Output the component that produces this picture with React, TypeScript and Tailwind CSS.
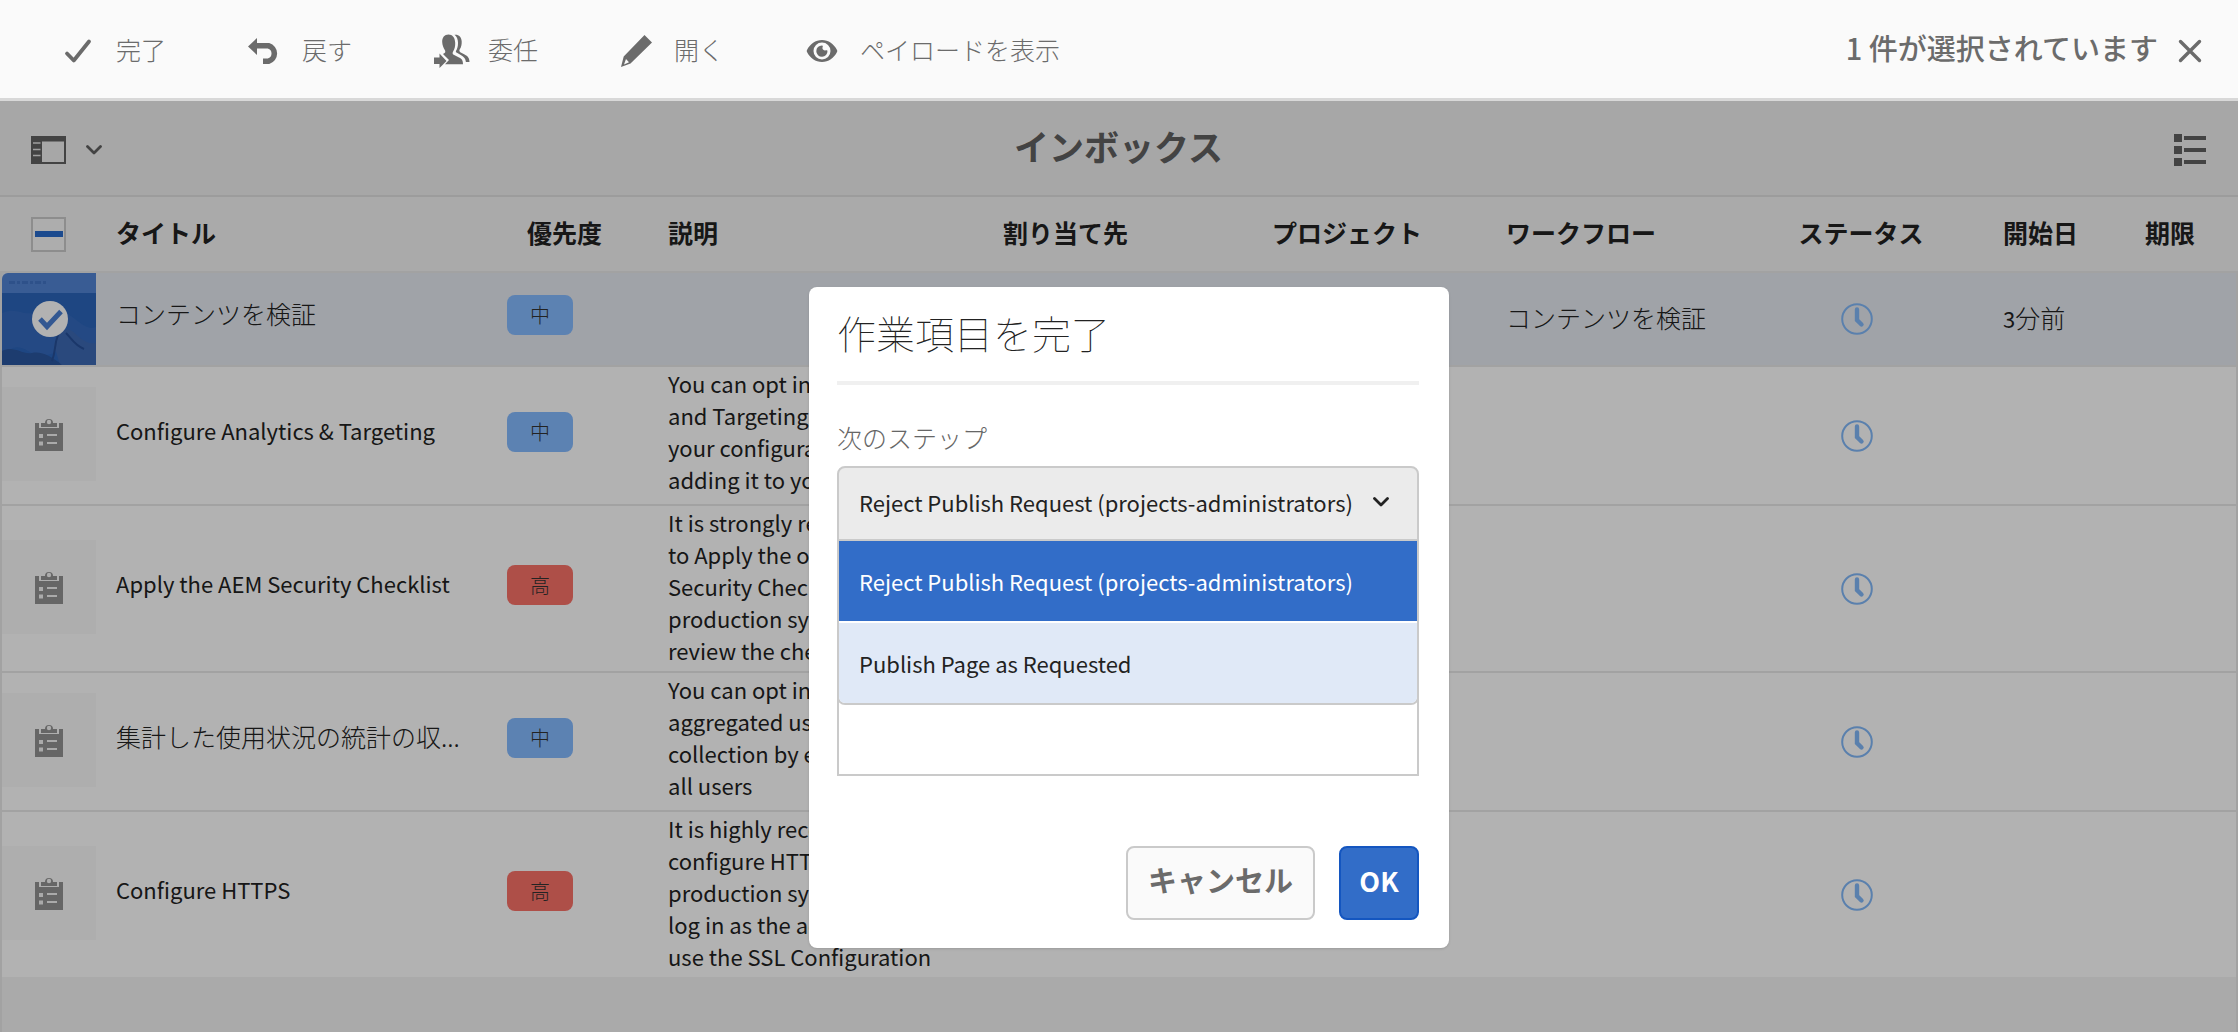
import type { ReactNode } from "react";

type Priority = "mid" | "high";

interface Item {
  title: string;
  jp?: boolean;
  priority: Priority;
  lines: string[];
  workflow?: string;
  started?: number;
  selected?: boolean;
}

const items: Item[] = [
  { title: "コンテンツを検証", jp: true, priority: "mid", lines: [], workflow: "コンテンツを検証", started: 3, selected: true },
  {
    title: "Configure Analytics & Targeting",
    priority: "mid",
    lines: ["You can opt in to Analytics", "and Targeting by editing", "your configuration and", "adding it to your site"],
  },
  {
    title: "Apply the AEM Security Checklist",
    priority: "high",
    lines: ["It is strongly recommended", "to Apply the official", "Security Checklist on", "production systems and", "review the checklist"],
  },
  {
    title: "集計した使用状況の統計の収...",
    jp: true,
    priority: "mid",
    lines: ["You can opt in to", "aggregated usage", "collection by enabling for", "all users"],
  },
  {
    title: "Configure HTTPS",
    priority: "high",
    lines: ["It is highly recommended", "configure HTTPS on", "production systems and", "log in as the admin to", "use the SSL Configuration"],
  },
];

function CheckIcon() {
  return (
    <svg viewBox="0 0 32 32" className="size-8" fill="none" stroke="currentColor" strokeWidth="3.8" strokeLinecap="round" strokeLinejoin="round">
      <path d="M5 18.500 11.800 25.500 27 6.500" />
    </svg>
  );
}

function UndoIcon() {
  return (
    <svg viewBox="0 0 32 32" className="size-8">
      <path fill="currentColor" d="M0 11.500 9 3v17z" />
      <path fill="none" stroke="currentColor" strokeWidth="5.600" d="M8 10.800h12.500a8 8 0 0 1 0 15.400H15" />
    </svg>
  );
}

function DelegateIcon() {
  return (
    <svg viewBox="0 0 36 36" className="-mr-1 size-9" fill="currentColor">
      <path d="M14.500 1.500c-4 0-6.500 3-6.300 7.500.1 3.200 1.200 5.800 2.600 8 .6.900.8 2.500-.2 3l-1.600.9 6 6-4 4.300H29c0-4.500-1.500-5.300-4.500-6.900l-4.800-2.500c-1.200-.6-1.400-2.200-.6-3.400 1.600-2.200 2.200-5 2.100-8.600-.200-5.300-2.700-8.300-6.700-8.300z" />
      <path d="M20.500 1.800c2.300 1.700 3.400 4.500 3.500 8 0 3.500-.6 5.800-2 8.300-.3.600-.1 1.200.5 1.500l4.300 2.300c3.400 1.900 4.700 3.600 5.100 7.100H35.500c-.1-4-1.600-5.700-4.900-7.500l-4.300-2.300c-1-.6-1.200-1.800-.5-2.900 1.400-2 2-4.700 1.900-7.800-.2-4.500-3-7.200-7.200-6.700z" />
      <path d="M0 24.500h5.500v-4L12.500 28l-7 7v-4H0z" />
    </svg>
  );
}

function PencilIcon() {
  return (
    <svg viewBox="0 0 32 32" className="size-8" fill="currentColor">
      <path fillRule="evenodd" d="m24.500 0 7.500 7.500L10.500 28.500 1 32l2.700-10.500zM6 24l-2 5.500 5-2.300z" />
    </svg>
  );
}

function EyeIcon() {
  return (
    <svg viewBox="0 0 32 32" className="size-8">
      <path fill="currentColor" fillRule="evenodd" d="M16 5C9.500 5 4 9 1 15c-.4.700-.4 1.300 0 2 3 6 8.500 10 15 10s12-4 15-10c.4-.7.4-1.300 0-2C28 9 22.500 5 16 5zm0 2.500a8.500 8.500 0 1 1 0 17 8.500 8.500 0 0 1 0-17z" />
      <path fill="currentColor" d="M16 10.500c1 0 1 .8.600 1.600-.7 1.700.6 3.600 2.600 3.300.9-.1 2-.6 2.300.4A5.600 5.600 0 1 1 16 10.500z" />
    </svg>
  );
}

function CloseIcon() {
  return (
    <svg viewBox="0 0 24 24" className="size-6" fill="none" stroke="currentColor" strokeWidth="3.400" strokeLinecap="round">
      <path d="m2.500 2.500 19 19M21.500 2.500l-19 19" />
    </svg>
  );
}

function RailIcon() {
  return (
    <svg viewBox="0 0 35 28" className="h-7 w-[35px]">
      <path fill="currentColor" fillRule="evenodd" d="M0 0h35v28H0zM11 5.500v20.500h22V5.500z" />
      <path stroke="#e4e4e4" strokeWidth="1.600" d="M2 7h7.500M2 13.500h7.500M2 19.500h7.500" />
    </svg>
  );
}

function ChevronIcon() {
  return (
    <svg viewBox="0 0 16 10" className="h-2.5 w-4" fill="none" stroke="currentColor" strokeWidth="2.800" strokeLinecap="round" strokeLinejoin="round">
      <path d="m1.500 1.500 6.500 6.500 6.500-6.500" />
    </svg>
  );
}

function ListIcon() {
  return (
    <svg viewBox="0 0 32 32" className="size-8" fill="currentColor">
      <path d="M0 0h8v8H0zM0 12h8v8H0zM0 24h8v8H0zM10 2h22v4H10zM10 14h22v4H10zM10 26h22v4H10z" />
    </svg>
  );
}

function ClockIcon() {
  return (
    <svg viewBox="0 0 32 32" className="mx-auto size-8 text-[#82b8f8]" fill="none" stroke="currentColor">
      <circle cx="16" cy="16" r="14.800" strokeWidth="2" />
      <path d="M16 6.500v10.500l4.500 4.500" strokeWidth="4.400" strokeLinecap="round" />
    </svg>
  );
}

function ClipboardIcon() {
  return (
    <svg viewBox="0 0 28 34" className="h-[34px] w-7" fill="#929292">
      <path d="M0 6h4v5h20V6h4v28H0z" />
      <path d="M6 6h4a4 4 0 0 1 8 0h4v4H6z" />
      <circle cx="14" cy="5" r="2.200" fill="#f6f6f6" />
      <path fill="#f4f4f4" d="M4 17h4v4H4zM4 24.500h4v4H4zM12 17h10v2H12zM12 25h10v2H12z" />
    </svg>
  );
}

function PageThumbnail() {
  return (
    <svg viewBox="0 0 94 92" className="block h-[92px] w-[94px]">
      <path fill="#5284d4" d="M0 92V6a6 6 0 0 1 6-6h88v92z" />
      <path fill="#2b65bb" d="M0 20h94v72H0z" />
      <path fill="#3469bd" d="M0 40c14-6 20 2 30 0s20-8 34 0 20 18 30 14v18c-20 2-22-6-32 2s-24 12-36 4-18-2-26 4z" />
      <path fill="#3d69b4" d="M52 72c4-14 12-18 18-14s12 14 24 12v22H58z" />
      <path fill="#2a569f" d="M0 78c12-6 20 4 30 2s20 4 30 12H0z" />
      <path fill="none" stroke="#264f98" strokeWidth="2" d="M50 88c4-10 2-16 6-26m8-2c6 6 8 12 18 16" />
      <path stroke="#4274c6" strokeWidth="3" strokeDasharray="6 2 3 2" d="M7 9.500h38" />
      <circle cx="48" cy="46" r="18" fill="#fff" />
      <path fill="none" stroke="#4a7fd2" strokeWidth="5" d="m38 46 7 7.500 14-15" />
    </svg>
  );
}

function ToolButton({ icon, label }: { icon: ReactNode; label: string }) {
  return (
    <button type="button" className="flex items-center gap-[22px] font-light">
      <span className="pt-1">{icon}</span>
      <span>{label}</span>
    </button>
  );
}

function Badge({ priority }: { priority: Priority }) {
  return (
    <span
      className={
        priority === "mid"
          ? "block h-10 w-[66px] rounded-lg bg-[#84baff] text-center text-xl leading-10 font-light text-[#333]"
          : "block h-10 w-[66px] rounded-lg bg-[#fa7168] text-center text-xl leading-10 font-light text-[#333]"
      }
    >
      {priority === "mid" ? "中" : "高"}
    </span>
  );
}

function Row({ item, first, last }: { item: Item; first: boolean; last: boolean }) {
  const cell = last ? "pl-5" : "border-b-2 border-[#e8e8e8] pl-5";
  const light = cell + " pb-1 font-light";
  return (
    <tr className={item.selected ? "bg-[#e6eaf1]" : "bg-white"}>
      <td className={last ? "border-l-2 border-[#e8e8e8]" : "border-b-2 border-l-2 border-[#e8e8e8]"}>
        {first ? (
          <PageThumbnail />
        ) : (
          <div className="mb-1 flex h-[94px] w-[94px] items-center justify-center bg-[#fafafa]">
            <ClipboardIcon />
          </div>
        )}
      </td>
      <td className={item.jp ? cell + " font-light" : cell + " text-[22px]"}>
        <div className="mb-3 whitespace-nowrap">{item.title}</div>
      </td>
      <td className={cell}>
        <div className="mb-2">
          <Badge priority={item.priority} />
        </div>
      </td>
      <td className={cell + " align-top text-[22px]"}>
        {item.lines.length > 0 && (
          <div className={item.lines.length > 4 ? "h-[165px]" : "h-[137px]"}>
            {item.lines.map((line) => (
              <div key={line} className="whitespace-nowrap">
                {line}
              </div>
            ))}
          </div>
        )}
      </td>
      <td className={cell} />
      <td className={cell} />
      <td className={light}>{item.workflow}</td>
      <td className={last ? "" : "border-b-2 border-[#e8e8e8]"}>
        <ClockIcon />
      </td>
      <td className={light}>
        {item.started && (
          <>
            <span className="text-[22px] font-normal">{item.started}</span>分前
          </>
        )}
      </td>
      <td className={cell + " border-r-2 border-[#e8e8e8]"} />
    </tr>
  );
}

function CompleteDialog() {
  const choices = ["Reject Publish Request (projects-administrators)", "Publish Page as Requested"];
  return (
    <section
      role="dialog"
      aria-labelledby="dialog-title"
      className="absolute top-[186px] left-[calc(50%-310px)] z-20 flex w-[640px] flex-col rounded-lg bg-white pr-[30px] pb-7 pl-7 shadow-sm"
    >
      <h2 id="dialog-title" className="border-b-4 border-[#f0f0f0] pt-[18px] pb-[21px] text-[39px] leading-[55px] font-thin text-[#222]">
        作業項目を完了
      </h2>
      <label htmlFor="next-step" className="mt-8 leading-10 font-light text-[#666]">
        次のステップ
      </label>
      <div className="relative mt-[9px] text-[22px]">
        <select
          id="next-step"
          className="block h-[75px] w-full appearance-none rounded-t-lg border-2 border-[#cacaca] bg-[#ebebeb] pr-14 pb-1 pl-5"
        >
          {choices.map((c) => (
            <option key={c}>{c}</option>
          ))}
        </select>
        <span className="pointer-events-none absolute top-[31px] right-[30px] leading-none">
          <ChevronIcon />
        </span>
        <ul role="listbox" aria-label="次のステップ" className="absolute inset-x-0 top-[73px] z-10 overflow-hidden rounded-b-lg border-2 border-[#cacaca] bg-white">
          <li role="option" aria-selected="true" className="flex h-[82px] items-center border-b-2 border-white bg-[#326dc8] pl-5 text-white">
            {choices[0]}
          </li>
          <li role="option" aria-selected="false" className="flex h-20 items-center bg-[#e0e9f7] pl-5">
            {choices[1]}
          </li>
        </ul>
      </div>
      <textarea aria-label="コメント" className="mt-32 block h-[107px] resize-none border-2 border-[#cacaca] bg-white p-4" />
      <div className="mt-[70px] flex justify-end gap-6">
        <button type="button" className="h-[74px] rounded-lg border-2 border-[#cacaca] bg-[#fafafa] px-5 pb-2 text-[29px] font-bold text-[#6b6b6b]">
          キャンセル
        </button>
        <button type="button" className="h-[74px] w-20 rounded-lg border-2 border-[#1456c0] bg-[#326dc8] pb-1 text-[27px] font-bold text-white">
          OK
        </button>
      </div>
    </section>
  );
}

export default function App() {
  const head = "border-b-2 border-[#e8e8e8] pb-1 pl-5";
  return (
    <div className="flex min-h-screen flex-col bg-[#f4f4f4] font-['Noto_Sans_CJK_JP',sans-serif] text-[25px] leading-8 text-[#222]">
      <header className="relative z-20 flex h-[101px] items-center justify-between border-b-3 border-[#d8d8d8] bg-[#fafafa] pr-9 pl-[62px] text-[#6b6b6b]">
        <nav className="flex gap-[82px]">
          <ToolButton icon={<CheckIcon />} label="完了" />
          <ToolButton icon={<UndoIcon />} label="戻す" />
          <ToolButton icon={<DelegateIcon />} label="委任" />
          <ToolButton icon={<PencilIcon />} label="開く" />
          <ToolButton icon={<EyeIcon />} label="ペイロードを表示" />
        </nav>
        <div className="flex items-center gap-5 text-[29px] font-medium">
          <span className="pb-1">1 件が選択されています</span>
          <button type="button" aria-label="選択を解除" className="pt-1">
            <CloseIcon />
          </button>
        </div>
      </header>

      <main className="relative flex flex-1 flex-col">
        <div className="grid h-24 grid-cols-[1fr_auto_1fr] items-center border-b-2 border-[#e0e0e0] bg-[#f0f0f0] pr-8 pl-[31px] text-[#616161]">
          <button type="button" aria-label="サイドパネル" className="flex items-center gap-5 pt-1">
            <RailIcon />
            <ChevronIcon />
          </button>
          <h1 className="pb-1 text-[35px] font-bold">インボックス</h1>
          <button type="button" aria-label="リスト表示" className="justify-self-end pt-1">
            <ListIcon />
          </button>
        </div>

        <table className="w-full table-fixed border-separate border-spacing-0 text-left">
          <colgroup>
            <col className="w-24" />
            <col className="w-[391px]" />
            <col className="w-[161px]" />
            <col className="w-[335px]" />
            <col className="w-[269px]" />
            <col className="w-[234px]" />
            <col className="w-[245px]" />
            <col className="w-[252px]" />
            <col className="w-[142px]" />
            <col className="w-[113px]" />
          </colgroup>
          <thead>
            <tr className="h-[76px]">
              <th className="border-b-2 border-[#e8e8e8] pl-[31px]">
                <input type="checkbox" id="all" aria-label="すべて選択" className="sr-only" />
                <label htmlFor="all" className="flex size-[35px] items-center justify-center border-2 border-[#cacaca] bg-[#f8f8f8]">
                  <span className="h-1.5 w-7 bg-[#286acc]" />
                </label>
              </th>
              <th className={head}>タイトル</th>
              <th className="border-b-2 border-[#e8e8e8] pb-1 pl-10">優先度</th>
              <th className={head}>説明</th>
              <th className={head}>割り当て先</th>
              <th className={head}>プロジェクト</th>
              <th className={head}>ワークフロー</th>
              <th className="border-b-2 border-[#e8e8e8] pb-1 pl-2 text-center">ステータス</th>
              <th className={head}>開始日</th>
              <th className={head}>期限</th>
            </tr>
          </thead>
          <tbody>
            {items.map((item, i) => (
              <Row key={item.title} item={item} first={i === 0} last={i === items.length - 1} />
            ))}
          </tbody>
        </table>
        <div className="flex-1 border-x-2 border-[#e8e8e8]" />
        <div className="absolute inset-0 z-10 bg-black/30" />
        <CompleteDialog />
      </main>
    </div>
  );
}
